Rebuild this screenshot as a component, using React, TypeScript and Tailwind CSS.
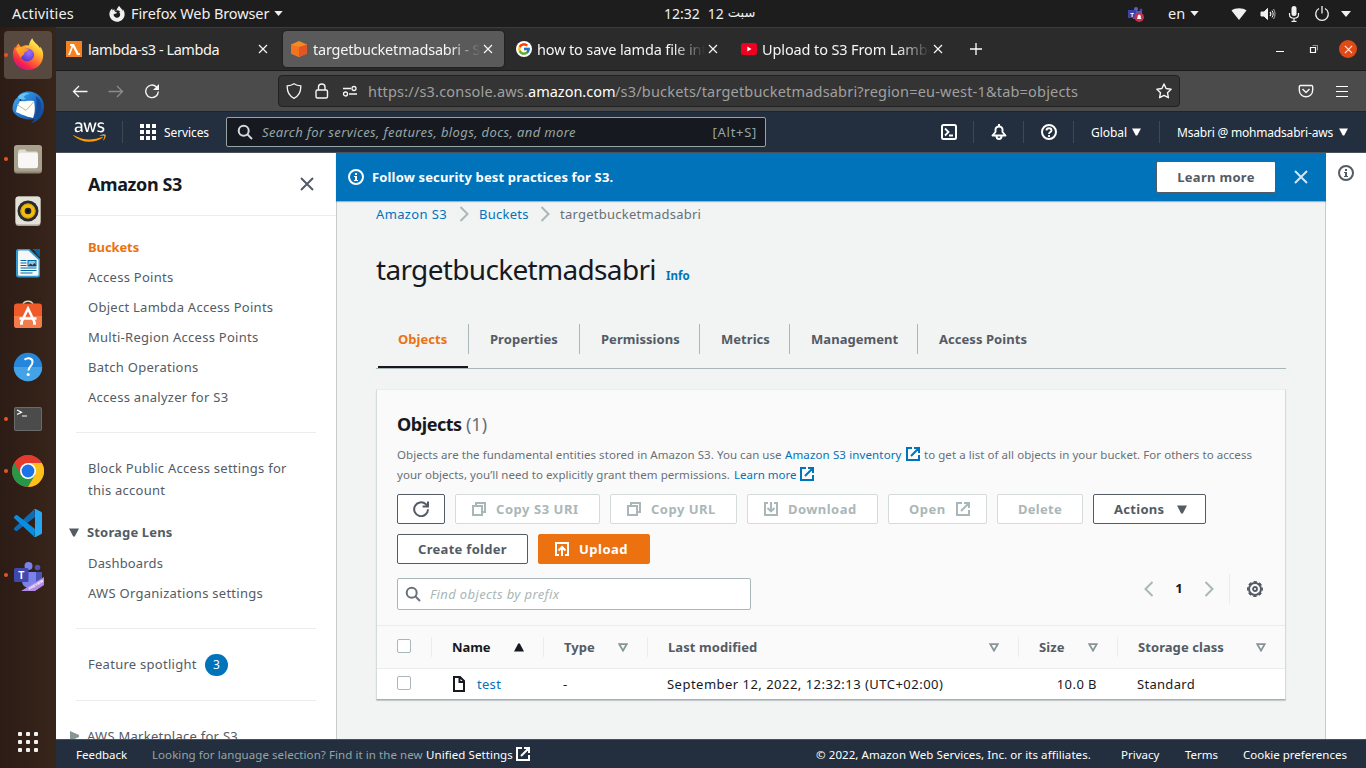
import React from 'react';
import { FaAws, FaFirefoxBrowser } from 'react-icons/fa';
import { FcGoogle } from 'react-icons/fc';

type P = { className?: string };

/* ---------- small line icons ---------- */
const Svg = ({ className = '', children, box = '0 0 16 16' }: P & { children: React.ReactNode; box?: string }) => (
  <svg viewBox={box} className={`shrink-0 ${className}`} fill="none" stroke="currentColor">{children}</svg>
);
const Caret = ({ className = 'h-[5px] w-[9px]' }: P) => (
  <svg viewBox="0 0 10 6" className={`shrink-0 ${className}`} fill="currentColor"><path d="M0 0h10L5 6z" /></svg>
);
const TriDown = ({ className = 'h-[9px] w-[10px]' }: P) => (
  <svg viewBox="0 0 10 9" className={`shrink-0 ${className}`} fill="currentColor"><path d="M0 .5h10L5.800 8.500H4.200z" /></svg>
);
const SortIcon = ({ className = '' }: P) => (
  <svg viewBox="0 0 10 9" className={`h-[9px] w-[10px] shrink-0 text-[#879596] ${className}`} fill="none" stroke="currentColor" strokeWidth="1.800"><path d="M1.300 1.200h7.400L5 7.600z" /></svg>
);
const External = ({ className = 'size-4' }: P) => (
  <Svg className={className}><path strokeWidth="2" d="M7 2H2v12h12V9M9 2h5v5M6 10l8-8" /></Svg>
);
const Refresh = ({ className = 'size-4' }: P) => (
  <Svg className={className}><path strokeWidth="2" d="M15 8.200A6.900 6.900 0 1 1 12.700 3.100L15 5M15 .5V5.600H9.600" /></Svg>
);
const Copy = () => (
  <Svg className="size-4"><path strokeWidth="2" d="M2 5h9v9H2zM5 4.500V2h9v9h-3" /></Svg>
);
const Download = () => (
  <Svg className="size-4"><path strokeWidth="2" d="M5 2H2v12h12V2h-3M8 1v9M4.500 7 8 10.400 11.500 7" /></Svg>
);
const UploadIcon = () => (
  <Svg className="size-4"><path strokeWidth="2" d="M5 14H2V2h12v12h-3M8 15V6M4.500 9.500 8 6l3.500 3.500" /></Svg>
);
const Magnifier = ({ className = 'size-4' }: P) => (
  <Svg className={className}><circle cx="6.700" cy="6.700" r="5" strokeWidth="2" /><path strokeWidth="2" d="m10.400 10.400 4.600 4.600" /></Svg>
);
const InfoIcon = ({ className = 'size-4' }: P) => (
  <Svg className={className}>
    <circle cx="8" cy="8" r="7" strokeWidth="2" />
    <path stroke="none" fill="currentColor" d="M7 4h2v2H7zM6 7h3v4h1v1H6v-1h1V8H6z" />
  </Svg>
);
const Cross = ({ className = 'size-4' }: P) => (
  <Svg className={className}><path strokeWidth="2" d="M2 2l12 12M14 2 2 14" /></Svg>
);
const ThinCross = ({ className = 'size-2.5' }: P) => (
  <Svg className={className} box="0 0 10 10"><path strokeWidth="1.200" d="M1 1l8 8M9 1 1 9" /></Svg>
);
const Chevron = ({ className = '' }: P) => (
  <Svg className={`h-4 w-[10px] text-[#aab7b8] ${className}`} box="0 0 10 16"><path strokeWidth="2" d="M1.500 1 8.500 8l-7 7" /></Svg>
);
const Gear = () => (
  <Svg className="size-4">
    <circle cx="8" cy="8" r="6" strokeWidth="2" />
    <circle cx="8" cy="8" r="7.200" strokeWidth="1.600" strokeDasharray="3.400 2.255" strokeDashoffset="1.700" />
    <circle cx="8" cy="8" r="2" strokeWidth="1.800" />
  </Svg>
);

/* ---------- dock icons ---------- */
const Firefox = () => (
  <svg viewBox="0 0 32 32" className="mb-[2px] size-8">
    <defs>
      <linearGradient id="ffa" x1="26" y1="3" x2="8" y2="30" gradientUnits="userSpaceOnUse">
        <stop offset="0" stopColor="#fff36b" /><stop offset=".3" stopColor="#ffbd2e" /><stop offset=".58" stopColor="#ff6b31" /><stop offset=".85" stopColor="#f5214c" /><stop offset="1" stopColor="#d5158c" />
      </linearGradient>
      <radialGradient id="ffb" cx=".6" cy=".3" r=".75"><stop offset="0" stopColor="#a06bff" /><stop offset="1" stopColor="#4a35c8" /></radialGradient>
      <linearGradient id="ffc" x1="0" y1="0" x2="1" y2="1"><stop offset="0" stopColor="#ffb62e" /><stop offset="1" stopColor="#ff7a25" /></linearGradient>
    </defs>
    <path fill="url(#ffa)" d="M20.300.3c-2 2.300-3.300 5-3.200 7.200-3-.5-6 .2-8 1.600C8 8.200 7 7 6.800 5.500 4.700 7 4.200 8.300 4 10L3 8.500C1.300 11.500.9 14 .9 17c0 8 6.500 15 15 15C25 32 31.200 25.500 31.200 17c0-3.400-1.200-6.800-3.200-8.600l.3 2.200c-1.600-3.900-6.600-5.600-8-10.300z" />
    <circle cx="15.600" cy="17.200" r="6.600" fill="url(#ffb)" />
    <path fill="url(#ffc)" d="M4 10.500c2-1.600 4-2 6.200-1.200 1.400 1.500 3 1.700 6.300 2-.2 2-2.800 2.300-3.800 3-.5.800-.2 1.700-.8 2.300-1.200 1-2.500 1.500-2.900 3.500C7 16.500 5 14.500 4 10.500z" />
    <path fill="url(#ffa)" d="M9 20c2 3.500 6 4.500 9.500 2.300 4-2 4.800-6 2.500-10 4 1.700 6 5 5 9.200C24.500 27 19 29 14 27c-3.500-1.400-5-4-5-7z" />
  </svg>
);
const Thunderbird = () => (
  <svg viewBox="0 0 32 32" className="size-8">
    <defs><linearGradient id="tb" x1="0" y1="0" x2="1" y2="1"><stop offset="0" stopColor="#4ab3ee" /><stop offset=".5" stopColor="#1e72cc" /><stop offset="1" stopColor="#123777" /></linearGradient></defs>
    <path fill="url(#tb)" d="M5 7C8 1 16-1 23 2c6 2.600 9 8 9 14 0 9-6 15-13 16 2-1.500 3-2.500 3.500-4C16 30 4 27 1 20c-1-3 0-7 1-9 .6-2 1.500-3 3-4z" />
    <path fill="#66c4f5" d="M6 6c3-4 8-5 12-3-3 .3-5 1-6.500 3L14 8 8 9z" />
    <path fill="#fffdf7" d="M5 16 8 10c4 1 9-1 14 0 1 6 1.500 11-1 17C13 25.500 8 22.500 4 21z" />
    <path fill="none" stroke="#b9b5b0" d="m5 13.500 9 6 8-9" />
    <path fill="#144a9d" d="m24 5 4 4c3 7 1 14-5 18 2-7 2-14 1-22z" />
    <circle cx="8.500" cy="9" r="1" fill="#16305c" />
  </svg>
);
const Files = () => (
  <svg viewBox="0 0 32 32" className="size-8">
    <rect x="2" y="2.500" width="28" height="28" rx="3" fill="#8b8573" /><rect x="2" y="2" width="28" height="26.500" rx="3" fill="#a8a18e" />
    <path fill="#dedad2" d="M6 9c0-1.500 1-2.500 2.500-2.500h4.500l2 2h9c1.300 0 2 1 2 2V14H6z" />
    <rect x="6" y="9.800" width="20" height="15.500" rx="2.500" fill="#f8f7f5" />
  </svg>
);
const Rhythmbox = () => (
  <svg viewBox="0 0 32 32" className="size-8">
    <rect x="3.500" y="1.500" width="25" height="29.500" rx="3" fill="#aaa596" /><rect x="3.500" y="1.500" width="25" height="28" rx="3" fill="#e4e1d9" />
    <circle cx="16" cy="16" r="10.500" fill="#2a2b31" /><circle cx="16" cy="16" r="7.600" fill="#f2bd12" /><circle cx="16" cy="16" r="7" fill="none" stroke="#d69c05" />
    <circle cx="16" cy="16" r="3.300" fill="#22252b" /><circle cx="16" cy="16" r="1.300" fill="#0b0c0e" />
  </svg>
);
const Writer = () => (
  <svg viewBox="0 0 32 32" className="size-8">
    <path fill="#2e9bd0" d="M6 2h11.500L28 12v16c0 1.500-.8 2.500-2.500 2.500h-19C5 30.500 4 29.500 4 28V4.500C4 3 4.800 2 6 2z" />
    <path fill="#f7f7f7" d="M7.500 3.500h8.800L26.500 13v14.500c0 .8-.5 1.200-1.200 1.200H7.200c-.8 0-1.200-.5-1.200-1.200V5c0-1 .5-1.500 1.500-1.500z" />
    <path fill="#0e639c" d="M20 2h8v8c-2-1-3-2-4-4s-2-3-4-4z" />
    <path stroke="#0369a3" strokeWidth="1.200" d="M8.500 13.500h6M8.500 16h6M8.500 18.500h6M8.500 21h16M8.500 23.500h16M8.500 26h12" />
    <rect x="16" y="13.500" width="8" height="5.500" fill="#8bc9e8" stroke="#0369a3" /><path d="m16 19 2.500-2.500 2 1.500 2-2 2 3z" fill="#333" />
  </svg>
);
const Software = () => (
  <svg viewBox="0 0 32 32" className="size-8">
    <path d="M11 5.500c1-4.500 9-4.500 10 0" fill="none" stroke="#e9d6b8" strokeWidth="1.500" />
    <rect x="2" y="4.500" width="28" height="24.500" rx="3" fill="#f05a28" /><path d="M2 17h28v9a3 3 0 0 1-3 3H5a3 3 0 0 1-3-3z" fill="#f47b4c" />
    <path d="M9.300 23.500 16 9.500l6.700 14M7.500 19.500h17M8 24.500h3M21 24.500h3" fill="none" stroke="#fff" strokeWidth="2.600" />
  </svg>
);
const Help = () => (
  <svg viewBox="0 0 32 32" className="size-8">
    <circle cx="16" cy="16" r="14.200" fill="#2586db" /><path d="M1.800 16a14.200 14.200 0 0 0 28.400 0z" fill="#44a3e6" />
    <path d="M12.500 8.800c3.500-3 8.500-1.500 8 2.700-.4 3.500-4 4-4 8" fill="none" stroke="#fff" strokeWidth="2" /><circle cx="16.200" cy="23.500" r="1.600" fill="#fff" />
  </svg>
);
const Terminal = () => (
  <svg viewBox="0 0 32 32" className="size-8">
    <rect x="2" y="4" width="28" height="24" rx="2" fill="#6b6b6b" /><rect x="3" y="5" width="26" height="22" rx="1.500" fill="#4b4b4b" />
    <path d="m5 7 4.500 2.200L5 11.500M10 13h5" fill="none" stroke="#fff" strokeWidth="1.200" />
  </svg>
);
const Chrome = () => (
  <svg viewBox="0 0 32 32" className="size-8">
    <circle cx="16" cy="16" r="16" fill="#e33b2e" />
    <path fill="#279847" d="M2.150 8A16 16 0 0 0 16 32l6.930-12z" /><path fill="#fcc11a" d="M29.860 8A16 16 0 0 1 16 32l6.930-12L16 8z" />
    <path fill="#e33b2e" d="M2.150 8a16 16 0 0 1 27.710 0H16l-6.930 12z" />
    <circle cx="16" cy="16" r="8" fill="#fff" /><circle cx="16" cy="16" r="6.400" fill="#1a73e8" />
  </svg>
);
const Code = () => (
  <svg viewBox="0 0 32 32" className="size-8">
    <path fill="#0f6bb4" d="M22.500 2 23 10 5 24l-1 .2-2-2c-.3-.4-.2-.9.200-1.300z" />
    <path fill="#0a8de0" d="M22.500 30 23 22 5 8 4 7.900l-2 2c-.3.400-.2 1 .2 1.300z" />
    <path fill="#27a7f2" d="M22 2.300c.5-.5 1-.5 1.600-.2l5.400 2.700c.6.300 1 .8 1 1.500v19.400c0 .700-.4 1.200-1 1.500l-5.400 2.700c-.6.300-1.100.3-1.600-.2l1-.7V3z" />
  </svg>
);
const Teams = () => (
  <svg viewBox="0 0 32 32" className="mt-px size-8">
    <circle cx="25.500" cy="7.500" r="2.800" fill="#4b52b8" /><path fill="#4b52b8" d="M22 12h8v8c0 3-3 5-6 5z" />
    <circle cx="16.500" cy="6" r="4" fill="#7b83eb" /><path fill="#7b83eb" d="M10 12h14v9c0 4.500-3 7-7 7s-7-3-7-7z" />
    <rect x="2" y="8" width="14.500" height="14" rx="1.500" fill="#4147ad" />
    <text x="9.200" y="18.500" textAnchor="middle" fontFamily="Liberation Sans" fontWeight="bold" fontSize="10" fill="#fff">T</text>
    <path fill="#b18be6" d="M9 31 32 17v8l-9 6z" />
    <text x="17.500" y="30" transform="rotate(-31 17.500 30)" fontFamily="Liberation Sans" fontWeight="bold" fontSize="3.600" fill="#fff">PREVIEW</text>
  </svg>
);

const dock = [
  { icon: <Firefox />, run: true, active: true }, { icon: <Thunderbird /> }, { icon: <Files />, run: true }, { icon: <Rhythmbox /> },
  { icon: <Writer /> }, { icon: <Software /> }, { icon: <Help /> }, { icon: <Terminal />, run: true },
  { icon: <Chrome />, run: true }, { icon: <Code /> }, { icon: <Teams />, run: true },
];

const Dock = () => (
  <aside className="flex w-14 shrink-0 flex-col bg-linear-to-r from-[#2c1c16] to-[#38251a] pt-1">
    <div className="flex flex-col gap-1">
      {dock.map((d, i) => (
        <div key={i} className="flex h-12 items-center">
          <span className={`ml-1 -mr-1 size-1 shrink-0 rounded-full ${d.run ? 'z-10 bg-[#e95420]' : ''}`} />
          <span className={`ml-0 flex size-12 shrink-0 items-center justify-center rounded-[4px] ${d.active ? 'bg-[#574840]' : ''}`}>{d.icon}</span>
        </div>
      ))}
    </div>
    <div className="mt-auto mb-4 ml-[18px] grid w-5 grid-cols-3 gap-1">
      {Array.from({ length: 9 }, (_, i) => <span key={i} className="size-1 rounded-[1px] bg-[#f2f2f2]" />)}
    </div>
  </aside>
);

/* ---------- desktop top bar ---------- */
const TopBar = () => (
  <header className="flex h-[27px] shrink-0 items-center bg-[#1d1d1d] text-[14.500px] text-[#f0f0f0]">
    <span className="ml-3 w-[97px] tracking-[0.15px]">Activities</span>
    <FaFirefoxBrowser className="mr-[6px] size-4" />
    <span className="w-[143px] tracking-[-0.1px]">Firefox Web Browser</span>
    <Caret />
    <div className="ml-[381px] flex gap-2 text-[14px]"><span>12:32</span><span>12</span><bdi dir="rtl" className="-ml-1 font-['DejaVu_Sans'] text-[13px]">سبت</bdi></div>
    <div className="ml-auto flex items-center">
      <svg viewBox="0 0 16 16" className="mr-6 size-4">
        <circle cx="8" cy="3" r="2" fill="#5b62c4" /><circle cx="13" cy="4" r="1.500" fill="#424aa5" /><rect x="5" y="5" width="9" height="8" fill="#5059c9" /><rect x="0" y="4" width="8" height="8" fill="#3c43a8" />
        <text x="4" y="10.500" textAnchor="middle" fontFamily="Liberation Sans" fontWeight="bold" fontSize="6" fill="#fff">T</text>
        <circle cx="11.200" cy="11.200" r="4.800" fill="#c4314b" /><path d="M8.800 13c.8-.8.8-1.300.8-2.500 0-2.500 3.200-2.500 3.200 0 0 1.200 0 1.700.8 2.500z" fill="#fff" />
      </svg>
      <span className="mr-[5px] w-[17px]">en</span><Caret className="mr-8 h-[5px] w-[9px]" />
      <svg viewBox="0 0 16 16" className="mr-[13px] size-4" fill="currentColor"><path d="M.5 4.500C4 1.500 12 1.500 15.500 4.500L8 14z" /></svg>
      <svg viewBox="0 0 16 16" className="mr-[10px] size-4" fill="none" stroke="currentColor"><path fill="currentColor" d="M1 6h3l3.500-3.500v11L4 10H1z" /><path d="M10 6c1 1 1 3 0 4" strokeWidth="1.300" /><path d="M12 4.500c1.500 2 1.500 5 0 7" strokeWidth="1" /><path d="M13.500 3c2 3 2 7 0 10" strokeWidth="1" opacity=".7" /></svg>
      <svg viewBox="0 0 16 16" className="mr-3 size-4" fill="none" stroke="currentColor"><rect x="5.500" y="0" width="5" height="10" rx="2.500" fill="currentColor" stroke="none" /><path d="M3.500 7v1.500c0 5 9 5 9 0V7M8 12v3M5.500 15.300h5" strokeWidth="1.200" /></svg>
      <svg viewBox="0 0 16 16" className="mr-[11px] size-4" fill="none" stroke="currentColor" strokeWidth="1.300"><path d="M5 2.500a6.300 6.300 0 1 0 6 0M8 0v7.500" /></svg>
      <Caret className="mr-[15px] h-[6px] w-[10px]" />
    </div>
  </header>
);

/* ---------- browser ---------- */
const fade = '[mask-image:linear-gradient(to_right,#000_calc(100%-32px),transparent)]';

const BrowserTabs = () => (
  <div className="flex h-11 shrink-0 items-center border-t border-b border-t-[#3c3c3c] border-b-[#1a1a1a] bg-[#2b2b2b] text-[14.500px] text-[#f5f5f5]">
    <div className="flex w-[227px] items-center pl-[10px]">
      <svg viewBox="0 0 16 16" className="mr-[6px] size-4"><rect width="16" height="16" fill="#f58220" /><path d="M4 3h4l4.500 9H14v2h-3L7 6l-3 8H2l3.500-8.500L5 5H4z" fill="#fff" /></svg>
      <span className="w-[170px] pt-px tracking-[-0.42px]">lambda-s3 - Lambda</span><ThinCross />
    </div>
    <div className="flex h-9 w-[221px] items-center rounded-[4px] bg-[#5a5a5a] pl-2 shadow-[0_0_2px_#111]">
      <svg viewBox="0 0 16 16" className="mr-[6px] size-4 shrink-0"><path d="M8 0l8 3.500v9L8 16l-8-3.500v-9z" fill="#f28b24" /><path d="M0 3.500 8 6v10l-8-3.500z" fill="#f5731f" /><path d="M16 3.500 8 6v10l8-3.500z" fill="#e25524" /></svg>
      <span className={`mr-[2px] w-[168px] overflow-hidden pt-px whitespace-nowrap tracking-[-0.2px] ${fade}`}>targetbucketmadsabri - S3</span><ThinCross />
    </div>
    <div className="flex w-[225px] items-center pl-3">
      <span className="mr-[5px] flex size-4 shrink-0 items-center justify-center rounded-full bg-white"><FcGoogle className="size-[14px]" /></span>
      <span className={`mr-[3px] w-[168px] overflow-hidden pt-px whitespace-nowrap tracking-[-0.15px] ${fade}`}>how to save lamda file into</span><ThinCross />
    </div>
    <div className="flex w-[241px] items-center pl-3">
      <svg viewBox="0 0 16 16" className="mr-[5px] size-4 shrink-0"><rect y="2" width="16" height="12" rx="2.500" fill="#f00020" /><path d="M6.300 5.500 10.500 8l-4.200 2.500z" fill="#fff" /></svg>
      <span className={`mr-[3px] w-[168px] overflow-hidden pt-px whitespace-nowrap tracking-[-0.12px] ${fade}`}>Upload to S3 From Lambda</span><ThinCross />
    </div>
    <svg viewBox="0 0 12 12" className="size-3" stroke="#fff" strokeWidth="1.300"><path d="M6 0v12M0 6h12" /></svg>
    <div className="ml-auto flex items-center">
      <span className="mr-[26px] mt-[5px] h-px w-2 bg-white" />
      <svg viewBox="0 0 8 8" className="mr-[21px] size-2 overflow-visible" fill="none" stroke="#fff"><path d="M.5 2.500h5v5h-5z" strokeWidth="1.200" /><path d="M2.500.5h5v5" opacity=".5" /></svg>
      <span className="mr-[9px] flex size-[18px] items-center justify-center rounded-full bg-[#e04a17]"><ThinCross className="size-[9px]" /></span>
    </div>
  </div>
);

const Toolbar = () => (
  <div className="flex h-[41px] shrink-0 items-center border-b border-[#232323] bg-[#4b4b4b] text-[#f5f5f5]">
    <Svg className="ml-4 size-4"><path strokeWidth="1.300" d="M15.500 8.500H2M7 3 1.500 8.500 7 14" /></Svg>
    <Svg className="ml-5 size-4 text-[#8c8c8c]"><path strokeWidth="1.300" d="M.5 8.500H14M9 3l5.500 5.500L9 14" /></Svg>
    <Svg className="ml-5 size-4"><path strokeWidth="1.400" d="M14.300 8.500a6.300 6.300 0 1 1-2-4.800L14 5.500" /><path d="M15 1v6H9z" fill="currentColor" stroke="none" /></Svg>
    <div className="ml-[118px] flex h-8 w-[902px] items-center rounded-[4px] border border-[#212121] bg-[#343434] pl-[7px]">
      <Svg className="size-4"><path strokeWidth="1.300" d="M8 .8c2 1.400 4.300 2 6.800 2 .2 5.700-1.800 10.200-6.800 12.500-5-2.300-7-6.800-6.800-12.500 2.500 0 4.800-.6 6.800-2z" /></Svg>
      <Svg className="ml-[12px] size-4"><rect x="2" y="7" width="11.500" height="8" rx="1.500" strokeWidth="1.400" /><path strokeWidth="1.400" d="M4.500 7V4c0-4 6.500-4 6.500 0v3" /></Svg>
      <Svg className="ml-3 size-4"><path strokeWidth="1.500" d="M1 5.500h8M7 11h8" /><circle cx="12" cy="5.500" r="2" strokeWidth="1.300" /><circle cx="3.500" cy="11" r="2" strokeWidth="1.300" /></Svg>
      <div className="ml-[10px] flex w-[789px] pt-[2px] text-[14.500px] tracking-[0.19px] whitespace-nowrap text-[#a0a0a0]">
        <span className="w-[160px]">https://s3.console.aws.</span><span className="w-[87px] tracking-[0px] text-white">amazon.com</span><span>/s3/buckets/targetbucketmadsabri?region=eu-west-1&amp;tab=objects</span>
      </div>
      <Svg className="ml-[-1px] size-4"><path strokeWidth="1.400" strokeLinejoin="round" d="m8 1 2.100 4.500 5 .7-3.600 3.500.9 5L8 12.300l-4.400 2.400.9-5L.9 6.200l5-.7z" /></Svg>
    </div>
    <Svg className="ml-[118px] size-4"><path strokeWidth="1.400" d="M2.500 2.500h11c.7 0 1.200.5 1.200 1.200V7c0 9-13.400 9-13.400 0V3.700c0-.7.500-1.200 1.200-1.200z" /><path strokeWidth="1.500" d="m4.500 6 3.500 3.500L11.500 6" /></Svg>
    <div className="ml-[22px] flex w-3 flex-col gap-1"><i className="h-px bg-white" /><i className="h-px bg-white" /><i className="h-px bg-white" /></div>
  </div>
);

const Sep = () => <span className="h-[22px] w-px shrink-0 bg-[#414750]" />;

const AwsNav = () => (
  <nav className="flex h-[41px] shrink-0 items-center border-b border-[#4a5059] bg-[#232f3e] text-[12px] text-white">
    <span className="relative ml-[17px] block h-[26px] w-[33px]">
      <FaAws className="h-[26px] w-[33px] [clip-path:inset(0_0_38%_0)]" />
      <FaAws className="absolute inset-0 h-[26px] w-[33px] text-[#ff9900] [clip-path:inset(62%_0_0_0)]" />
    </span>
    <span className="w-4" /><Sep />
    <span className="ml-[17px] grid grid-cols-3 gap-[2px]">{Array.from({ length: 9 }, (_, i) => <i key={i} className="size-1 bg-white" />)}</span>
    <span className="ml-2 w-[62px] pt-[2px] tracking-[-0.1px]">Services</span>
    <div className="flex h-[30px] w-[540px] items-center rounded-[2px] border border-[#95a5a6] bg-[#16191f] pr-[9px] pl-[10px]">
      <Magnifier className="size-4 text-[#d5dbdb]" />
      <span className="ml-[9px] pt-px text-[13px] tracking-[0.38px] text-[#95a5a6] italic">Search for services, features, blogs, docs, and more</span>
      <span className="-mr-[1px] ml-auto pt-px text-[13px] tracking-[0.7px] text-[#95a5a6]">[Alt+S]</span>
    </div>
    <Svg className="ml-[175px] size-4"><rect x="1" y="1" width="14" height="14" rx="1.500" strokeWidth="2" /><path strokeWidth="1.800" d="m4 4.500 3.500 3.500L4 11.500M8 11.500h4" /></Svg>
    <span className="w-4" /><Sep />
    <Svg className="mr-4 ml-[17px] size-4"><path strokeWidth="1.900" strokeLinejoin="round" d="M1.500 11.500h13L11.500 8V5.500c0-4-7-4-7 0V8z" /><path strokeWidth="2" d="M5.500 12c0 4 5 4 5 0M8 0v2" /></Svg>
    <Sep />
    <Svg className="mr-4 ml-[17px] size-4"><circle cx="8" cy="8" r="7" strokeWidth="2" /><path strokeWidth="1.800" d="M5.500 6.500c0-3 5-3 5 0C10.500 8 8 8 8 10M8 11v2" /></Svg>
    <Sep />
    <span className="ml-[17px] w-[41px] pt-[2px] tracking-[-0.05px]">Global</span><TriDown className="h-[8px] w-[9px]" />
    <span className="w-[18px]" /><Sep />
    <span className="ml-[17px] w-[162px] pt-[2px] tracking-[-0.2px] whitespace-nowrap">Msabri @ mohmadsabri-aws</span><TriDown className="h-[8px] w-[9px]" />
  </nav>
);

/* ---------- sidebar ---------- */
const Rule = ({ className = '' }: P) => <hr className={`mx-5 border-[#eaeded] ${className}`} />;

const Sidebar = () => (
  <aside className="flex h-full w-[280px] shrink-0 flex-col overflow-hidden bg-white text-[13px] tracking-[0.27px] text-[#545b64]">
    <div className="flex h-[63px] shrink-0 items-center justify-between border-b border-[#eaeded] pr-[21px] pl-8">
      <h2 className="text-[18px] font-bold tracking-[-0.4px] text-[#16191f]">Amazon S3</h2>
      <Cross />
    </div>
    <ul className="mt-4 shrink-0 pl-8 leading-[30px]">
      <li className="font-bold tracking-[-0.1px] text-[#ec7211]">Buckets</li>
      <li>Access Points</li>
      <li>Object Lambda Access Points</li>
      <li>Multi-Region Access Points</li>
      <li>Batch Operations</li>
      <li>Access analyzer for S3</li>
    </ul>
    <Rule className="mt-5" />
    <p className="mt-[24px] shrink-0 pr-10 pl-8 leading-[22px]">Block Public Access settings for this account</p>
    <div className="mt-[16px] flex h-[30px] shrink-0 items-center pl-[13px] font-bold tracking-[0.15px]"><TriDown className="mr-2 h-[9px] w-[10px]" /><span className="pt-[2px]">Storage Lens</span></div>
    <ul className="mt-px shrink-0 pl-8 leading-[30px]"><li className="tracking-[0.15px]">Dashboards</li><li>AWS Organizations settings</li></ul>
    <Rule className="mt-5" />
    <div className="mt-5 flex h-[31px] shrink-0 items-center pl-8"><span className="w-[117px]">Feature spotlight</span><span className="flex h-[22px] w-[23px] items-center justify-center rounded-full bg-[#0073bb] text-[12px] text-white">3</span></div>
    <Rule className="mt-5" />
    <div className="mt-5 flex h-[30px] shrink-0 items-center pl-[14px]"><svg viewBox="0 0 9 10" className="mr-2 h-[10px] w-[9px]" fill="#879596"><path d="M0 0v10l9-4V4z" /></svg><span className="pt-[2px]">AWS Marketplace for S3</span></div>
  </aside>
);

/* ---------- bucket content ---------- */
const Btn = ({ className = '', before, after, children }: P & { before?: React.ReactNode; after?: React.ReactNode; children?: React.ReactNode }) => (
  <button className={`flex items-center rounded-[2px] border text-[13px] font-bold whitespace-nowrap ${className}`}>
    {before}{children && <span className="pt-[2px]">{children}</span>}{after}
  </button>
);
const off = 'h-[30px] border-[#d5dbdb] bg-white text-[#aab7b8]';
const on = 'border-[#545b64] bg-white text-[#545b64]';

const pageTabs = [
  { label: 'Properties', w: 'w-[111px]' }, { label: 'Permissions', w: 'w-[120px]' }, { label: 'Metrics', w: 'w-[90px]' },
  { label: 'Management', w: 'w-[128px]' }, { label: 'Access Points', w: 'w-[130px]' },
];

const Box = () => <span className="mb-[2px] block size-[14px] rounded-[2px] border border-[#aab7b8] bg-white" />;

const columns = [
  { label: 'Type', w: 'w-[103px]' }, { label: 'Last modified', w: 'w-[370px]' }, { label: 'Size', w: 'w-[98px]' }, { label: 'Storage class', w: 'flex-1' },
];

const ObjectsCard = () => (
  <section className="ml-10 mt-5 flex h-[311px] w-[910px] flex-col rounded-[1px] border border-t-[#eaeded] border-r-[#d5dbdb] border-b-[#a7aeb2] border-l-[#d5dbdb] bg-[#fafafa] shadow-[0_1px_1px_rgba(0,28,36,0.2)]">
    <h2 className="mt-[19px] ml-5 h-[30px] text-[18px] leading-[30px] font-bold tracking-[-0.45px] text-[#16191f]">Objects <span className="font-normal tracking-[0px] text-[#687078]">(1)</span></h2>
    <div className="mt-[6px] ml-5 text-[11.500px] leading-5 tracking-[0.05px] whitespace-nowrap text-[#687078]">
      <p className="flex h-5 items-center"><span className="w-[388px]">Objects are the fundamental entities stored in Amazon S3. You can use </span><span className="w-[120px] tracking-[0.13px] text-[#0073bb]">Amazon S3 inventory</span><External className="mb-[2px] size-4 text-[#0073bb]" /><span className="ml-[3px]">to get a list of all objects in your bucket. For others to access</span></p>
      <p className="flex h-5 items-center"><span className="w-[337px]">your objects, you’ll need to explicitly grant them permissions. </span><span className="w-[65px] tracking-[0px] text-[#0073bb]">Learn more</span><External className="mb-[2px] size-4 text-[#0073bb]" /></p>
    </div>
    <div className="mt-[9px] ml-5 flex gap-[10px]">
      <Btn className={`h-[30px] w-12 justify-center ${on}`} before={<Refresh />} />
      <Btn className={`w-[145px] gap-[9px] pl-[15px] tracking-[0.55px] ${off}`} before={<Copy />}>Copy S3 URI</Btn>
      <Btn className={`w-[127px] gap-[9px] pl-[15px] tracking-[0.5px] ${off}`} before={<Copy />}>Copy URL</Btn>
      <Btn className={`w-[131px] gap-[9px] pl-[15px] tracking-[0.45px] ${off}`} before={<Download />}>Download</Btn>
      <Btn className={`w-[99px] justify-between pr-[15px] pl-5 tracking-[0.5px] ${off}`} after={<External />}>Open</Btn>
      <Btn className={`w-[86px] justify-center tracking-[0.25px] ${off}`}>Delete</Btn>
      <Btn className={`h-[30px] w-[113px] justify-between pr-[18px] pl-5 tracking-[0.3px] ${on}`} after={<TriDown />}>Actions</Btn>
    </div>
    <div className="mt-[10px] ml-5 flex gap-[10px]">
      <Btn className={`h-[30px] w-[131px] justify-center tracking-[0.3px] ${on}`}>Create folder</Btn>
      <Btn className="h-[30px] w-[112px] gap-[9px] border-[#ec7211] bg-[#ec7211] pl-[15px] tracking-[0.5px] text-white" before={<UploadIcon />}>Upload</Btn>
    </div>
    <div className="mt-[10px] ml-5 flex h-10 shrink-0 items-center">
      <div className="flex h-8 w-[354px] items-center rounded-[2px] border border-[#aab7b8] bg-white pl-[7px] text-[13px] tracking-[0.37px] text-[#aab7b8] italic"><Magnifier className="mr-[9px] size-4 text-[#687078]" /><span className="pt-px">Find objects by prefix</span></div>
      <div className="mb-[10px] ml-[393px] flex h-[30px] items-center">
        <Chevron className="rotate-180" />
        <span className="w-[50px] text-center text-[13px] font-bold text-[#16191f]">1</span>
        <Chevron />
        <span className="ml-[15px] h-[30px] w-px bg-[#eaeded]" />
        <span className="ml-[17px] text-[#545b64]"><Gear /></span>
      </div>
    </div>
    <div className="mt-[11px] flex h-11 shrink-0 items-center border-y border-[#eaeded] text-[13px] font-bold tracking-[0.07px] text-[#545b64]">
      <span className="w-[54px] pl-5"><Box /></span>
      <i className="h-5 w-px bg-[#eaeded]" />
      <span className="flex w-[111px] items-center justify-between pr-[19px] pl-5 text-[#16191f]"><span className="pt-[2px] tracking-[-0.1px]">Name</span><svg viewBox="0 0 10 9" className="h-[9px] w-[10px]" fill="currentColor"><path d="M0 8.500h10L5.800.5H4.200z" /></svg></span>
      {columns.map((c) => (
        <div key={c.label} className={`flex items-center ${c.w === 'flex-1' ? 'flex-1' : ''}`}>
          <i className="h-5 w-px bg-[#eaeded]" />
          <span className={`flex items-center justify-between pr-[19px] pl-5 ${c.w}`}><span className="pt-[2px]">{c.label}</span><SortIcon /></span>
        </div>
      ))}
    </div>
    <div className="flex h-[30px] shrink-0 items-center bg-white text-[13px] text-[#16191f]">
      <span className="w-[74px] pl-5"><Box /></span>
      <Svg className="size-4"><path strokeWidth="2" d="M3 1h6l4 4v10H3zM8.500 1v5H13" /></Svg>
      <span className="ml-[10px] w-[86px] pt-[2px] tracking-[0.3px] text-[#0073bb]">test</span>
      <span className="w-[104px] pt-[2px]">-</span>
      <span className="w-[350px] pt-[2px] tracking-[0.48px]">September 12, 2022, 12:32:13 (UTC+02:00)</span>
      <span className="w-[80px] pt-[2px] text-right tracking-[0.45px]">10.0 B</span>
      <span className="ml-10 pt-[2px] tracking-[0.3px]">Standard</span>
    </div>
  </section>
);

const Main = () => (
  <main className="flex h-full w-[990px] shrink-0 flex-col border-x border-[#c6cccd] bg-[#f2f3f3]">
    <div className="-mx-px flex h-12 shrink-0 items-center bg-[#0073bb] pl-3 text-white shadow-[0_1px_1px_rgba(0,28,36,0.3)]">
      <InfoIcon />
      <b className="ml-2 pt-[2px] text-[13px] tracking-[0.16px]">Follow security best practices for S3.</b>
      <Btn className={`ml-auto h-8 w-[120px] justify-center tracking-[0.3px] ${on}`}>Learn more</Btn>
      <Cross className="mr-[17px] ml-[17px] size-4 text-[#d5e6f0]" />
    </div>
    <div className="ml-[39px] mt-[3px] flex h-5 items-center text-[13px] tracking-[0.25px] text-[#687078]">
      <span className="w-[83px] pt-[2px] tracking-[0.37px] text-[#0073bb]">Amazon S3</span><Chevron />
      <span className="ml-[10px] w-[61px] pt-[2px] text-[#0073bb]">Buckets</span><Chevron />
      <span className="ml-[10px] pt-[2px]">targetbucketmadsabri</span>
    </div>
    <div className="ml-[39px] mt-[28px] flex h-9 items-center"><h1 className="w-[290px] pb-[2px] text-[28px] tracking-[-0.67px] text-[#16191f]">targetbucketmadsabri</h1><b className="mt-[12px] text-[11.500px] text-[#0073bb]">Info</b></div>
    <div className="ml-[39px] mt-[36px] flex h-[45px] w-[910px] items-start border-b border-[#aab7b8] pl-[2px] text-[13px] font-bold tracking-[0.05px] text-[#545b64]">
      <span className="h-11 w-[90px] border-b-2 border-[#16191f] pl-5 leading-[30px] text-[#ec7211]">Objects</span>
      {pageTabs.map((t) => <span key={t.label} className={`${t.w} h-[30px] border-l border-[#aab7b8] pl-[21px] leading-[30px]`}>{t.label}</span>)}
    </div>
    <div className="-ml-px"><ObjectsCard /></div>
  </main>
);

const Footer = () => (
  <footer className="flex h-[29px] shrink-0 items-center border-t border-[#4a5059] bg-[#232f3e] pt-px pl-5 text-[11.500px] whitespace-nowrap text-white">
    <span className="w-[76px]">Feedback</span>
    <span className="w-[274px] tracking-[0.07px] text-[#95a5a6]">Looking for language selection? Find it in the new</span>
    <span className="w-[89px] tracking-[0.07px]">Unified Settings</span><External className="mb-[2px] size-4" />
    <span className="ml-[285px] w-[305px] tracking-[0.08px]">© 2022, Amazon Web Services, Inc. or its affiliates.</span>
    <span className="w-[64px]">Privacy</span><span className="w-[58px]">Terms</span><span>Cookie preferences</span>
  </footer>
);

export default function App() {
  return (
    <div className="flex h-[768px] w-[1366px] flex-col overflow-hidden font-['Noto_Sans','DejaVu_Sans',sans-serif]">
      <TopBar />
      <div className="flex min-h-0 flex-1">
        <Dock />
        <div className="flex w-[1310px] flex-col">
          <BrowserTabs />
          <Toolbar />
          <AwsNav />
          <div className="flex min-h-0 flex-1 overflow-hidden">
            <Sidebar />
            <Main />
            <aside className="flex flex-1 justify-center bg-white pt-3 text-[#545b64]"><InfoIcon /></aside>
          </div>
          <Footer />
        </div>
      </div>
    </div>
  );
}
